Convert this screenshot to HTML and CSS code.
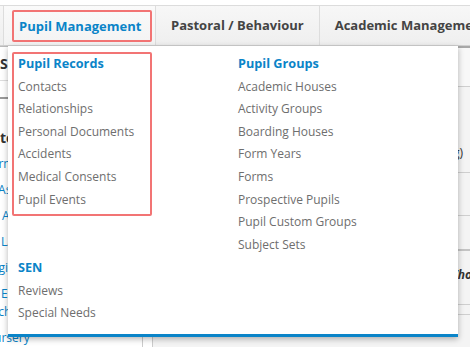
FILE: index.html
```html
<!DOCTYPE html>
<html lang="en">
<head>
<meta charset="utf-8">
<title>Pupil Management</title>
<link rel="stylesheet" href="styles.css">
</head>
<body>
<div class="page">
  <div class="topbar"></div>
  <nav class="tabs">
    <div class="tab stub"></div>
    <div class="tab active"><span class="tab-label">Pupil Management</span></div>
    <div class="tab"><span>Pastoral / Behaviour</span></div>
    <div class="tab"><span>Academic Management</span></div>
  </nav>
  <div class="body-area">
    <aside class="side">
      <div class="side-head">Search</div>
      <div class="side-bar"></div>
      <div class="side-title">to-do</div>
      <div class="side-links">
        <a class="side-link" href="#">Form Lists</a>
        <a class="side-link" href="#">IT Assets</a>
        <a class="side-link" href="#">To Approve</a>
        <a class="side-link" href="#">Ex LAC Pupils</a>
        <a class="side-link" href="#">Logins</a>
        <a class="side-link" href="#">Ex EXAMS</a>
        <a class="side-link tight" href="#">Each Term</a>
        <a class="side-link" href="#">Nursery</a>
      </div>
    </aside>
    <main class="main">
      <div class="row r1"></div>
      <div class="row r2"><span class="cell-end">(Boarding)</span></div>
      <div class="row r3"></div>
      <div class="row r4"></div>
      <div class="row r5"><span class="cell-note">Who's who</span></div>
      <div class="row r6"></div>
    </main>
  </div>

  <div class="dropdown">
    <div class="col">
      <div class="group hl">
        <div class="group-title">Pupil Records</div>
        <a href="#">Contacts</a>
        <a href="#">Relationships</a>
        <a href="#">Personal Documents</a>
        <a href="#">Accidents</a>
        <a href="#">Medical Consents</a>
        <a href="#">Pupil Events</a>
      </div>
      <div class="group sen">
        <div class="group-title">SEN</div>
        <a href="#">Reviews</a>
        <a href="#">Special Needs</a>
      </div>
    </div>
    <div class="col">
      <div class="group">
        <div class="group-title">Pupil Groups</div>
        <a href="#">Academic Houses</a>
        <a href="#">Activity Groups</a>
        <a href="#">Boarding Houses</a>
        <a href="#">Form Years</a>
        <a href="#">Forms</a>
        <a href="#">Prospective Pupils</a>
        <a href="#">Pupil Custom Groups</a>
        <a href="#">Subject Sets</a>
      </div>
    </div>
  </div>
</div>
</body>
</html>
```

FILE: styles.css
```css
html, body {
  margin: 0;
  padding: 0;
  overflow: hidden;
  background: #fff;
  font-family: "Open Sans", "Noto Sans", sans-serif;
}

.page {
  position: relative;
  width: 470px;
  height: 347px;
  overflow: hidden;
}

.topbar {
  height: 5px;
  border-bottom: 1px solid #dcdcdc;
  background: #fff;
}

.tabs {
  display: flex;
  height: 39px;
  background: linear-gradient(#f7f7f7, #efefef);
  border-bottom: 1px solid #d0d0d0;
  white-space: nowrap;
  overflow: hidden;
}

.tab {
  flex: none;
  border-right: 1px solid #dddddd;
  padding: 0 15px;
  font-weight: bold;
  font-size: 13px;
  line-height: 39px;
  color: #444;
}

.tab.stub {
  width: 3px;
  padding: 0;
}

.tab.active {
  box-sizing: border-box;
  width: 152px;
  padding: 4px 0 0 8px;
  background: linear-gradient(#fafafa, #f3f3f3);
}

.tab-label {
  display: block;
  box-sizing: border-box;
  width: 140px;
  height: 32px;
  border: 2px solid #f27474;
  border-radius: 2px;
  padding-left: 5px;
  line-height: 28px;
  color: #0a84c8;
}

.body-area {
  display: flex;
  height: 301px;
}

.side {
  flex: none;
  width: 142px;
  border-right: 1px solid #cccccc;
  border-top: 1px solid #bbbbbb;
  overflow: hidden;
  background: #fff;
  white-space: nowrap;
}

.side-head {
  height: 33px;
  border-bottom: 1px solid #dddddd;
  font-weight: bold;
  font-size: 14px;
  line-height: 33px;
  color: #333;
}

.side-bar {
  height: 16px;
  border-bottom: 2px solid #999999;
}

.side-title {
  margin-top: 30px;
  font-weight: bold;
  font-size: 14px;
  line-height: 18px;
  color: #333;
}

.side-links {
  display: flex;
  flex-direction: column;
  margin-left: -15px;
}

.side-link {
  margin-top: 8px;
  font-size: 12px;
  line-height: 18px;
  color: #0a84c8;
  text-decoration: none;
}

.side-link.tight {
  margin-top: 0;
}

.main {
  flex: 1;
  margin-left: 9px;
  border-left: 1px solid #cccccc;
  border-top: 2px solid #a8a8a8;
  background: #f4f4f4;
  overflow: hidden;
}

.row {
  display: flex;
  box-sizing: border-box;
  border-bottom: 1px solid #cfcfcf;
  white-space: nowrap;
  overflow: hidden;
  font-size: 12px;
  line-height: 18px;
  color: #333;
}

.r1 { height: 39px; background: #f8f8f8; }
.r2 { height: 86px; align-items: flex-end; justify-content: flex-end; padding: 0 7px 10px 0; }
.r3 { height: 43px; }
.r4 { height: 35px; border-bottom: 2px solid #c4c4c4; }
.r5 { height: 54px; padding: 15px 0 0 294px; }
.r6 { height: 10px; }

.cell-note {
  font-weight: bold;
  font-style: italic;
}

.dropdown {
  position: absolute;
  top: 46px;
  left: 8px;
  box-sizing: border-box;
  width: 450px;
  height: 291px;
  padding: 6px 0 0 10px;
  background: #fff;
  border-bottom: 3px solid #0a84c8;
  box-shadow: 0 2px 6px rgba(0, 0, 0, 0.3);
  display: grid;
  grid-template-columns: 220px 1fr;
  align-items: start;
}

.col {
  display: flex;
  flex-direction: column;
  align-items: flex-start;
}

.group {
  box-sizing: border-box;
  border: 2px solid transparent;
  border-radius: 2px;
  margin-left: -6px;
  padding: 0 4px 2.4px;
}

.group.hl {
  width: 140px;
  border-color: #f27474;
}

.group.sen {
  margin-top: 40.4px;
}

.group-title {
  font-weight: bold;
  font-size: 12.7px;
  line-height: 19px;
  color: #0a84c8;
  margin-bottom: 2.6px;
}

.group a {
  display: block;
  font-size: 12px;
  line-height: 22.6px;
  color: #6e6e6e;
  text-decoration: none;
  white-space: nowrap;
}
```
